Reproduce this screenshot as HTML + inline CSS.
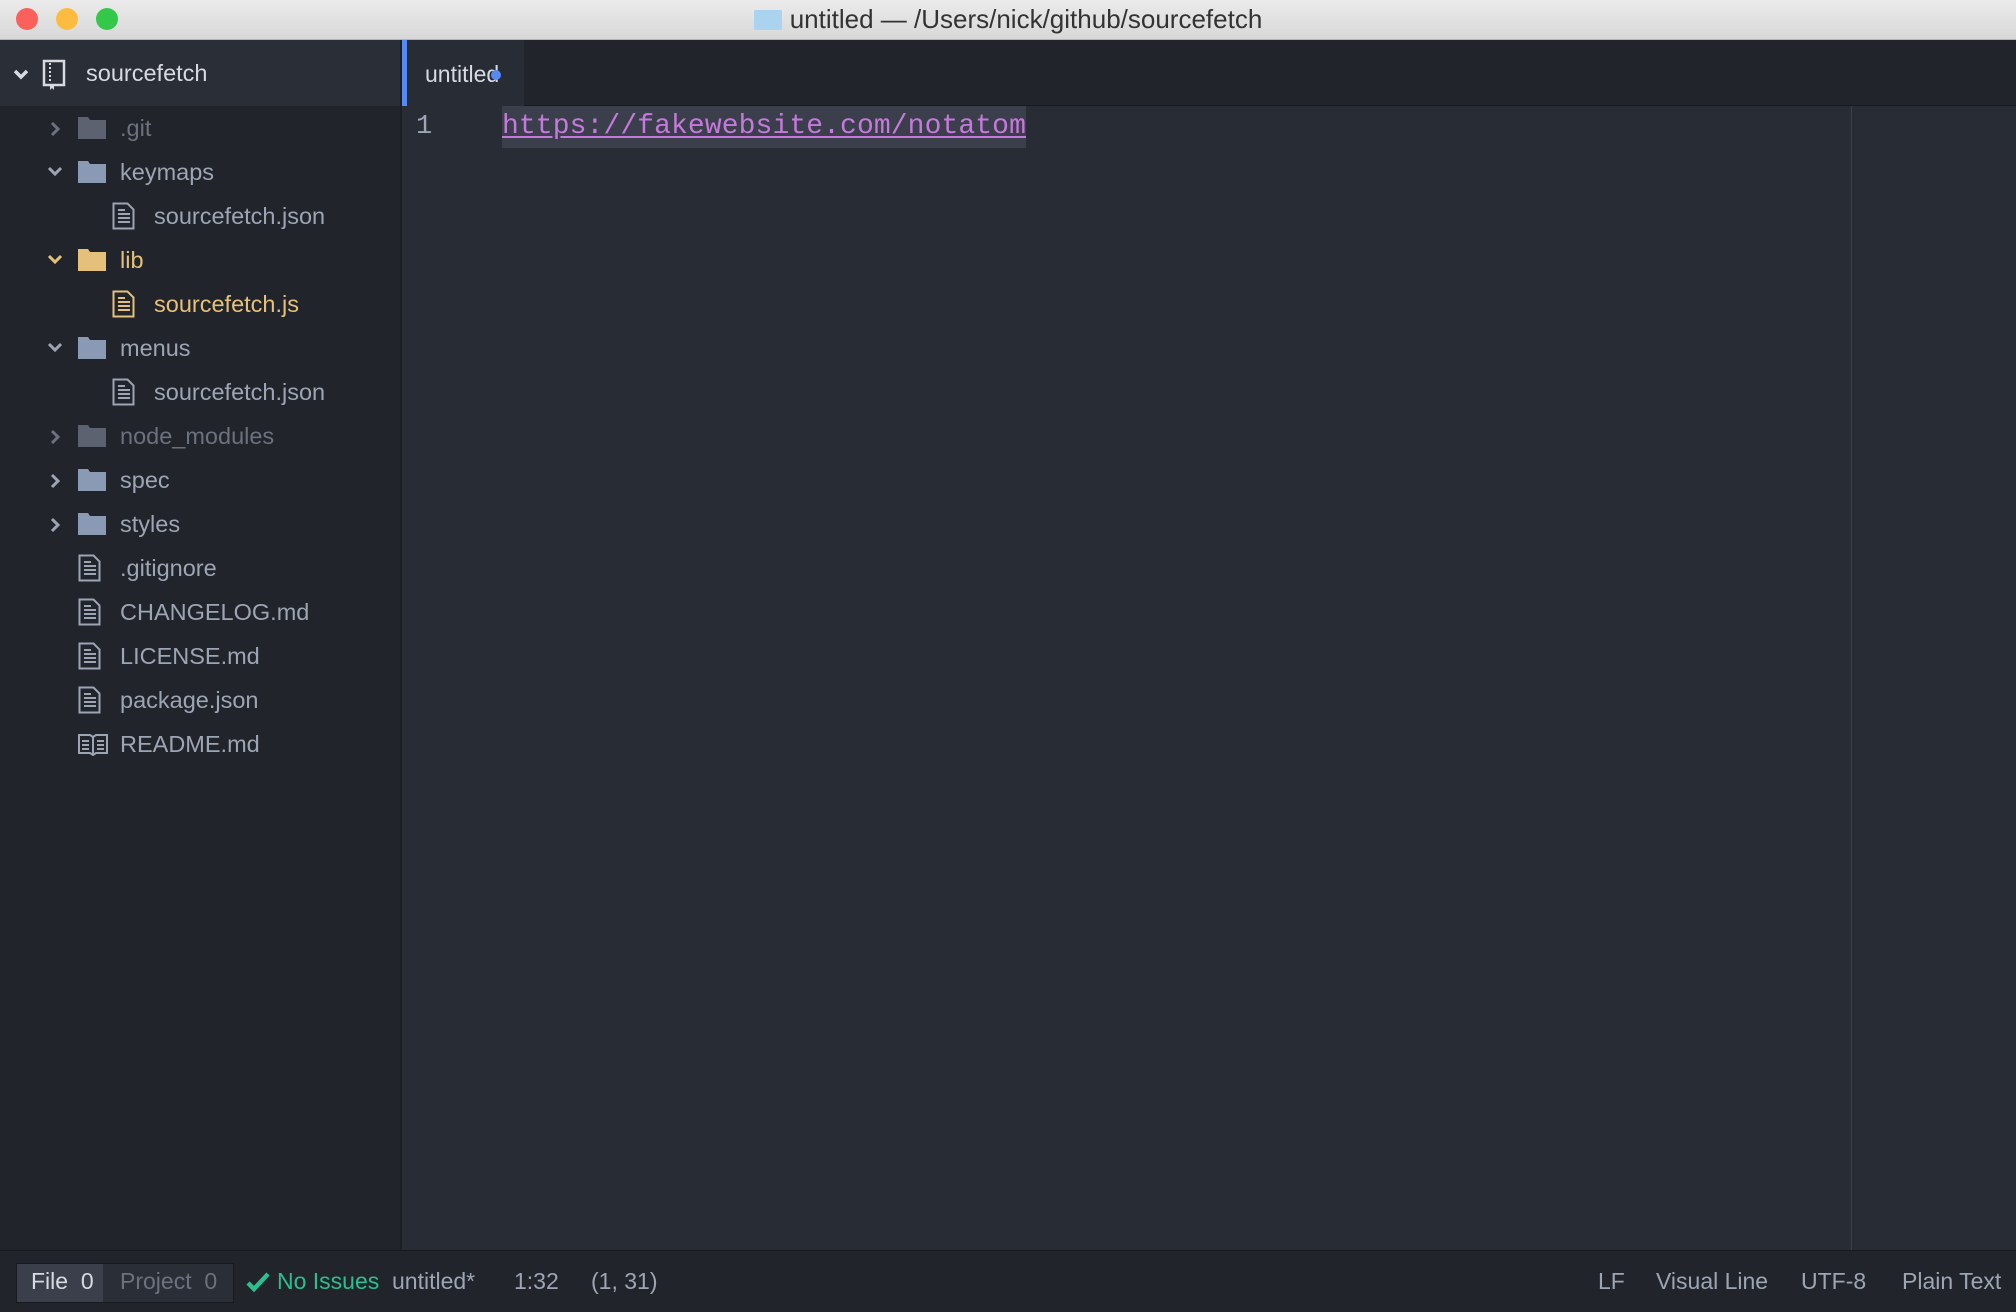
<!DOCTYPE html>
<html><head><meta charset="utf-8"><style>
*{margin:0;padding:0;box-sizing:border-box}
body{width:2016px;height:1312px;overflow:hidden;background:#282c34;font-family:"Liberation Sans",sans-serif;position:relative}
.title{position:absolute;left:0;top:0;width:2016px;height:40px;background:linear-gradient(#ebebeb,#d8d8d8);border-bottom:1px solid #b5b5b5;text-align:center;font-size:26px;line-height:38px;color:#333}
.dot{position:absolute;top:8px;width:22px;height:22px;border-radius:50%}
.side{position:absolute;left:0;top:40px;width:402px;height:1210px;background:#21252b;border-right:2px solid #1b1e23}
.shead{position:absolute;left:0;top:0;width:400px;height:66px;background:#2a2e36}
.row{position:absolute;left:0;height:44px;width:400px;font-size:23.5px;line-height:44px;color:#9da5b4}
.row span{position:absolute}
.tabbar{position:absolute;left:402px;top:40px;width:1614px;height:66px;background:#21252b;border-bottom:1px solid #181a1f}
.tab{position:absolute;left:0;top:0;width:122px;height:66px;background:#282c34;border-left:5px solid #568af2}
.editor{position:absolute;left:402px;top:106px;width:1614px;height:1144px;background:#282c34}
.status{position:absolute;left:0;top:1250px;width:2016px;height:62px;background:#21252b;border-top:1px solid #181a1f;font-size:23px;color:#9da5b4}
.status span{position:absolute;top:17px}
</style></head><body>
<div class="title">
<div class="dot" style="left:16px;background:#fc605b"></div>
<div class="dot" style="left:56px;background:#fdbc40"></div>
<div class="dot" style="left:96px;background:#34c84a"></div>
<span style="display:inline-block;width:28px;height:20px;background:#a9d3ef;border-radius:2px;vertical-align:-2px;margin-right:8px"></span>untitled — /Users/nick/github/sourcefetch</div>

<div class="side">
<div class="shead">
<svg style="position:absolute;left:12px;top:28px" width="18" height="14" viewBox="0 0 18 14"><path d="M3 3l6 6 6-6" stroke="#d7dae0" stroke-width="3.5" fill="none"/></svg>
<svg style="position:absolute;left:42px;top:19px" width="24" height="32" viewBox="0 0 24 32"><rect x="2" y="2" width="20" height="24" fill="none" stroke="#d7dae0" stroke-width="2.5"/><path d="M8 4v20" stroke="#d7dae0" stroke-width="2" stroke-dasharray="2 2"/><path d="M8 26v5l2-2 2 2v-5" fill="#d7dae0"/></svg>
<span style="position:absolute;left:86px;top:20px;font-size:23.5px;color:#d7dae0">sourcefetch</span>
</div>
</div>

<div class="tabbar"><div class="tab"><span style="position:absolute;left:18px;top:21px;font-size:23px;color:#d7dae0">untitle<span style="position:relative">d<span style="position:absolute;right:-2px;top:9px;width:10px;height:10px;border-radius:50%;background:#568af2"></span></span></span></div></div>

<div class="editor">
<span style="position:absolute;left:14px;top:6px;font-size:27px;color:#9da5b4;font-family:'Liberation Mono',monospace">1</span>
<div style="position:absolute;left:100px;top:0;width:524px;height:42px;background:#3a3f4b"></div>
<span style="position:absolute;left:100px;top:5px;font-size:28px;color:#c678dd;font-family:'Liberation Mono',monospace;text-decoration:underline;text-underline-offset:3px;letter-spacing:0.1px">https://fakewebsite.com/notatom</span>
<div style="position:absolute;left:1449px;top:0;width:1px;height:1144px;background:#3a3f4b"></div>
</div>

<div class="status">
<div style="position:absolute;left:16px;top:12px;width:218px;height:40px;border:1px solid #181a1f;background:#2a2e36"></div>
<div style="position:absolute;left:17px;top:13px;width:86px;height:38px;background:#3a3f4b"></div>
<span style="left:31px;color:#d7dae0">File&nbsp; 0</span>
<span style="left:120px;color:#6b717d">Project&nbsp; 0</span>
<svg style="position:absolute;left:246px;top:20px" width="24" height="22" viewBox="0 0 24 22"><path d="M2 12l6 6L22 3" stroke="#2bbf8e" stroke-width="4.5" fill="none"/></svg>
<span style="left:277px;color:#2bbf8e">No Issues</span>
<span style="left:392px">untitled*</span>
<span style="left:514px">1:32</span>
<span style="left:591px">(1, 31)</span>
<span style="left:1598px">LF</span>
<span style="left:1656px">Visual Line</span>
<span style="left:1801px">UTF-8</span>
<span style="left:1902px">Plain Text</span>
</div>

<div style="position:absolute;left:0;top:106px;width:400px">
<div class="row" style="top:0;color:#6b717d"><svg style="position:absolute;left:50px;top:15px" width="12" height="16" viewBox="0 0 12 16"><path d="M2 2l6 6-6 6" stroke="#6b717d" stroke-width="3" fill="none"/></svg><svg style="position:absolute;left:78px;top:9px" width="28" height="24" viewBox="0 0 28 24"><path d="M0 2h10l2 3h16v19H0z" fill="#5d6270"/></svg><span style="left:120px">.git</span></div>
<div class="row" style="top:44px"><svg style="position:absolute;left:46px;top:15px" width="18" height="14" viewBox="0 0 18 14"><path d="M3 3l6 6 6-6" stroke="#9da5b4" stroke-width="3" fill="none"/></svg><svg style="position:absolute;left:78px;top:9px" width="28" height="24" viewBox="0 0 28 24"><path d="M0 2h10l2 3h16v19H0z" fill="#8a9ab4"/></svg><span style="left:120px">keymaps</span></div>
<div class="row" style="top:88px"><svg style="position:absolute;left:112px;top:8px" width="24" height="28" viewBox="0 0 24 28"><path d="M1.5 1.5h14l6 6v19h-20z" fill="none" stroke="#9da5b4" stroke-width="2"/><path d="M6 12h12M6 16h12M6 20h12M6 8h7" stroke="#9da5b4" stroke-width="2"/></svg><span style="left:154px">sourcefetch.json</span></div>
<div class="row" style="top:132px;color:#e5c07b"><svg style="position:absolute;left:46px;top:15px" width="18" height="14" viewBox="0 0 18 14"><path d="M3 3l6 6 6-6" stroke="#e5c07b" stroke-width="3" fill="none"/></svg><svg style="position:absolute;left:78px;top:9px" width="28" height="24" viewBox="0 0 28 24"><path d="M0 2h10l2 3h16v19H0z" fill="#e5c07b"/></svg><span style="left:120px">lib</span></div>
<div class="row" style="top:176px;color:#e5c07b"><svg style="position:absolute;left:112px;top:8px" width="24" height="28" viewBox="0 0 24 28"><path d="M1.5 1.5h14l6 6v19h-20z" fill="none" stroke="#e5c07b" stroke-width="2"/><path d="M6 12h12M6 16h12M6 20h12M6 8h7" stroke="#e5c07b" stroke-width="2"/></svg><span style="left:154px">sourcefetch.js</span></div>
<div class="row" style="top:220px"><svg style="position:absolute;left:46px;top:15px" width="18" height="14" viewBox="0 0 18 14"><path d="M3 3l6 6 6-6" stroke="#9da5b4" stroke-width="3" fill="none"/></svg><svg style="position:absolute;left:78px;top:9px" width="28" height="24" viewBox="0 0 28 24"><path d="M0 2h10l2 3h16v19H0z" fill="#8a9ab4"/></svg><span style="left:120px">menus</span></div>
<div class="row" style="top:264px"><svg style="position:absolute;left:112px;top:8px" width="24" height="28" viewBox="0 0 24 28"><path d="M1.5 1.5h14l6 6v19h-20z" fill="none" stroke="#9da5b4" stroke-width="2"/><path d="M6 12h12M6 16h12M6 20h12M6 8h7" stroke="#9da5b4" stroke-width="2"/></svg><span style="left:154px">sourcefetch.json</span></div>
<div class="row" style="top:308px;color:#6b717d"><svg style="position:absolute;left:50px;top:15px" width="12" height="16" viewBox="0 0 12 16"><path d="M2 2l6 6-6 6" stroke="#6b717d" stroke-width="3" fill="none"/></svg><svg style="position:absolute;left:78px;top:9px" width="28" height="24" viewBox="0 0 28 24"><path d="M0 2h10l2 3h16v19H0z" fill="#5d6270"/></svg><span style="left:120px">node_modules</span></div>
<div class="row" style="top:352px"><svg style="position:absolute;left:50px;top:15px" width="12" height="16" viewBox="0 0 12 16"><path d="M2 2l6 6-6 6" stroke="#9da5b4" stroke-width="3" fill="none"/></svg><svg style="position:absolute;left:78px;top:9px" width="28" height="24" viewBox="0 0 28 24"><path d="M0 2h10l2 3h16v19H0z" fill="#8a9ab4"/></svg><span style="left:120px">spec</span></div>
<div class="row" style="top:396px"><svg style="position:absolute;left:50px;top:15px" width="12" height="16" viewBox="0 0 12 16"><path d="M2 2l6 6-6 6" stroke="#9da5b4" stroke-width="3" fill="none"/></svg><svg style="position:absolute;left:78px;top:9px" width="28" height="24" viewBox="0 0 28 24"><path d="M0 2h10l2 3h16v19H0z" fill="#8a9ab4"/></svg><span style="left:120px">styles</span></div>
<div class="row" style="top:440px"><svg style="position:absolute;left:78px;top:8px" width="24" height="28" viewBox="0 0 24 28"><path d="M1.5 1.5h14l6 6v19h-20z" fill="none" stroke="#9da5b4" stroke-width="2"/><path d="M6 12h12M6 16h12M6 20h12M6 8h7" stroke="#9da5b4" stroke-width="2"/></svg><span style="left:120px">.gitignore</span></div>
<div class="row" style="top:484px"><svg style="position:absolute;left:78px;top:8px" width="24" height="28" viewBox="0 0 24 28"><path d="M1.5 1.5h14l6 6v19h-20z" fill="none" stroke="#9da5b4" stroke-width="2"/><path d="M6 12h12M6 16h12M6 20h12M6 8h7" stroke="#9da5b4" stroke-width="2"/></svg><span style="left:120px">CHANGELOG.md</span></div>
<div class="row" style="top:528px"><svg style="position:absolute;left:78px;top:8px" width="24" height="28" viewBox="0 0 24 28"><path d="M1.5 1.5h14l6 6v19h-20z" fill="none" stroke="#9da5b4" stroke-width="2"/><path d="M6 12h12M6 16h12M6 20h12M6 8h7" stroke="#9da5b4" stroke-width="2"/></svg><span style="left:120px">LICENSE.md</span></div>
<div class="row" style="top:572px"><svg style="position:absolute;left:78px;top:8px" width="24" height="28" viewBox="0 0 24 28"><path d="M1.5 1.5h14l6 6v19h-20z" fill="none" stroke="#9da5b4" stroke-width="2"/><path d="M6 12h12M6 16h12M6 20h12M6 8h7" stroke="#9da5b4" stroke-width="2"/></svg><span style="left:120px">package.json</span></div>
<div class="row" style="top:616px"><svg style="position:absolute;left:78px;top:10px" width="30" height="24" viewBox="0 0 30 24"><path d="M1 3h11l3 2 3-2h11v18H18l-3 2-3-2H1z" fill="none" stroke="#9da5b4" stroke-width="2"/><path d="M15 5v17M4 9h7M4 13h7M4 17h7M19 9h7M19 13h7M19 17h7" stroke="#9da5b4" stroke-width="2"/></svg><span style="left:120px">README.md</span></div>
</div>
</body></html>
